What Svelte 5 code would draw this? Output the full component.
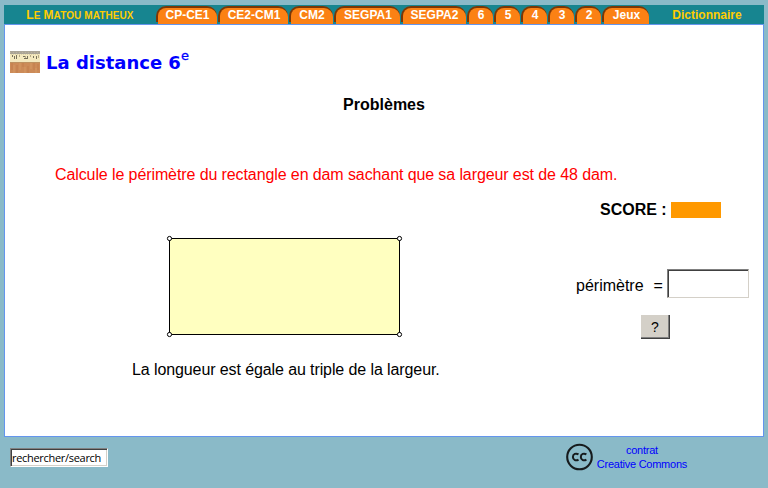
<script>
  const tabs = [
    ['CP-CE1', 61], ['CE2-CM1', 70], ['CM2', 44], ['SEGPA1', 66], ['SEGPA2', 65],
    ['6', 26], ['5', 26], ['4', 26], ['3', 26], ['2', 26], ['Jeux', 47]
  ];
  let answer = $state('');
  let search = $state('rechercher/search');
</script>

<div class="page">
  <header>
    <a class="brand" href="#accueil"><span>L</span>e <span>M</span>atou matheux</a>
    <nav>
      {#each tabs as [label, width]}
        <a class="tab" href="#niveau" style="width: {width}px"><span>{label}</span></a>
      {/each}
    </nav>
    <a class="dico" href="#dictionnaire">Dictionnaire</a>
  </header>

  <main>
    <div class="title">
      <svg width="30" height="22" viewBox="0 0 30 22" aria-hidden="true">
        <rect width="30" height="3" fill="#aaa497" />
        <path d="M0 1.5h30" stroke="#bcb39d" stroke-dasharray="1 2" />
        <rect y="3" width="30" height="8" fill="#f4e9bf" />
        <path d="M1 3.5h28" stroke="#ded2aa" stroke-dasharray="1 1" />
        <path d="M2.5 4v2M4.5 5v3M6.5 4v4M13 5.5h2M14 7.5h4M17.5 5v2M23.5 5v2M26.5 5v3" stroke="#77705a" fill="none" />
        <path d="M9.5 4v2M20.5 4v2M28.5 4v3M15.5 5v2" stroke="#b7aa85" />
        <rect y="11" width="30" height="11" fill="#cc8b58" />
        <path d="M0 11.5h30" stroke="#bd9160" />
        <path d="M2 12v7M7 14v8M13 12v4M18 15v7M24 12v7M28 13v6" stroke="#c27d4b" />
        <path d="M4 14v8M10 12v7M15 16v6M21 12v6M26 17v5" stroke="#d69963" />
      </svg>
      <h1>La distance 6<sup>e</sup></h1>
    </div>
    <h2>Problèmes</h2>
    <p class="question">Calcule le périmètre du rectangle en dam sachant que sa largeur est de 48 dam.</p>
    <div class="exercise">
      <div class="figure">
        <svg width="240" height="106" viewBox="0 0 240 106" aria-label="Rectangle">
          <rect x="4.5" y="4.5" width="230" height="96" fill="#ffffc0" stroke="#000" />
          <g fill="#fff" stroke="#000">
            <circle cx="4.5" cy="4.5" r="2.1" /><circle cx="234.5" cy="4.5" r="2.1" />
            <circle cx="4.5" cy="100.5" r="2.1" /><circle cx="234.5" cy="100.5" r="2.1" />
          </g>
        </svg>
        <p>La longueur est égale au triple de la largeur.</p>
      </div>
      <form onsubmit={(e) => e.preventDefault()}>
        <div class="score"><b>SCORE :</b><i></i></div>
        <label><span>périmètre</span><span class="eq">=</span><input bind:value={answer} aria-label="périmètre" /></label>
        <button>?</button>
      </form>
    </div>
  </main>

  <footer>
    <input bind:value={search} aria-label="rechercher" />
    <a class="license" href="#contrat">
      <svg width="28" height="28" viewBox="0 0 28 28" aria-hidden="true">
        <circle cx="13.5" cy="14" r="12.3" fill="none" stroke="#161b1d" stroke-width="2.1" />
        <g fill="none" stroke="#161b1d" stroke-width="2">
          <path d="M12.5 11.4C10.1 9.9 6.9 10.8 6.9 14s3.2 4.1 5.6 2.6" />
          <path d="M20.4 11.4C18 9.9 14.8 10.8 14.8 14s3.2 4.1 5.6 2.6" />
        </g>
      </svg>
      <span>contrat<br />Creative Commons</span>
    </a>
  </footer>
</div>

<style>
  :global(body) { margin: 0; background: #8abac8; }
  .page {
    box-sizing: border-box; width: 768px; height: 488px; padding: 5px 4px 0;
    overflow: hidden; background: #8abac8; color: #000;
    font: 16px/18px "Liberation Sans", Arial, sans-serif;
  }
  a { text-decoration: none; }
  p, h1, h2 { margin: 0; }
  header {
    display: flex; height: 19px; background: #178590;
    font-size: 12px; line-height: 19px; font-weight: bold;
  }
  .brand {
    width: 152px; line-height: 22px; text-align: center; text-transform: uppercase;
    font-size: 10px; letter-spacing: 0.1px; color: #fc0;
  }
  .brand span { font-size: 12px; line-height: 0; }
  nav { display: flex; gap: 1px; padding-top: 1px; }
  .tab {
    box-sizing: border-box; height: 18px; padding: 2px 0 0 2px;
    background: linear-gradient(#7a3706 0 16px, #178590 16px);
    border-radius: 10px 10px 0 0; color: #fff; text-align: center;
  }
  .tab span {
    display: block; height: 16px; line-height: 14px; background: #fb8114;
    border-radius: 8px 9px 0 0;
  }
  .dico { flex: 1; padding: 1px 0 0 1px; text-align: center; color: #fc0; }
  main {
    box-sizing: border-box; height: 413px; border: 1px solid #6495ed;
    padding-top: 24px; background: #fff;
  }
  .title { display: flex; height: 34px; padding-left: 5px; }
  .title svg { margin-top: 2px; }
  h1 { margin-left: 6px; color: #00f; font: bold 18px/27px "DejaVu Sans", Verdana, sans-serif; }
  sup { font-size: 13px; line-height: 0; vertical-align: 9px; font-weight: normal; -webkit-text-stroke: 0.3px; }
  h2 { margin-top: 13px; text-align: center; font-size: 16px; line-height: 18px; }
  .question { margin: 52px 0 0 50px; color: #f00; letter-spacing: -0.1px; }
  .exercise { display: flex; }
  .figure { width: 570px; padding-top: 50px; }
  .figure svg { display: block; margin-left: 160px; }
  .figure p { margin: 21px 0 0 127px; letter-spacing: -0.1px; }
  form { display: flex; flex-direction: column; padding-top: 17px; }
  .score { display: flex; align-items: center; gap: 4px; margin-left: 25px; height: 18px; }
  .score i { width: 50px; height: 16px; background: #f90; }
  label { display: flex; align-items: center; margin-top: 50px; margin-left: 1px; height: 29px; }
  label span { padding-top: 4px; }
  label .eq { margin: 0 4px 0 10px; }
  input { box-sizing: border-box; border: 2px solid; padding: 0; border-radius: 0; background: #fff; }
  label input {
    width: 82px; height: 29px; border-color: #808080 #d4d0c8 #d4d0c8 #808080;
    box-shadow: inset 1px 1px #404040; border-width: 1px;
  }
  button {
    width: 29px; height: 24px; margin: 17px 0 0 66px; padding: 0;
    border: solid; border-width: 0 1px 1px 0; border-color: #404040;
    box-shadow: inset -1px -1px #808080; background: #d4d0c8;
    font: 14px "Liberation Sans", Arial, sans-serif; color: #000;
  }
  footer { display: flex; justify-content: space-between; padding: 6px 77px 0 6px; }
  footer input {
    width: 98px; height: 19px; margin-top: 5px; padding-left: 1px; border-width: 1px;
    border-color: #808080 #fff #fff #808080;
    box-shadow: inset 1px 1px #404040, inset -1px -1px #d4d0c8;
    font: 11px "Open Sans", sans-serif; letter-spacing: -0.3px; color: #000;
  }
  .license { display: flex; gap: 3px; color: #00f; font-size: 11px; line-height: 14px; text-align: center; }
  .license span { letter-spacing: -0.25px; }
</style>
